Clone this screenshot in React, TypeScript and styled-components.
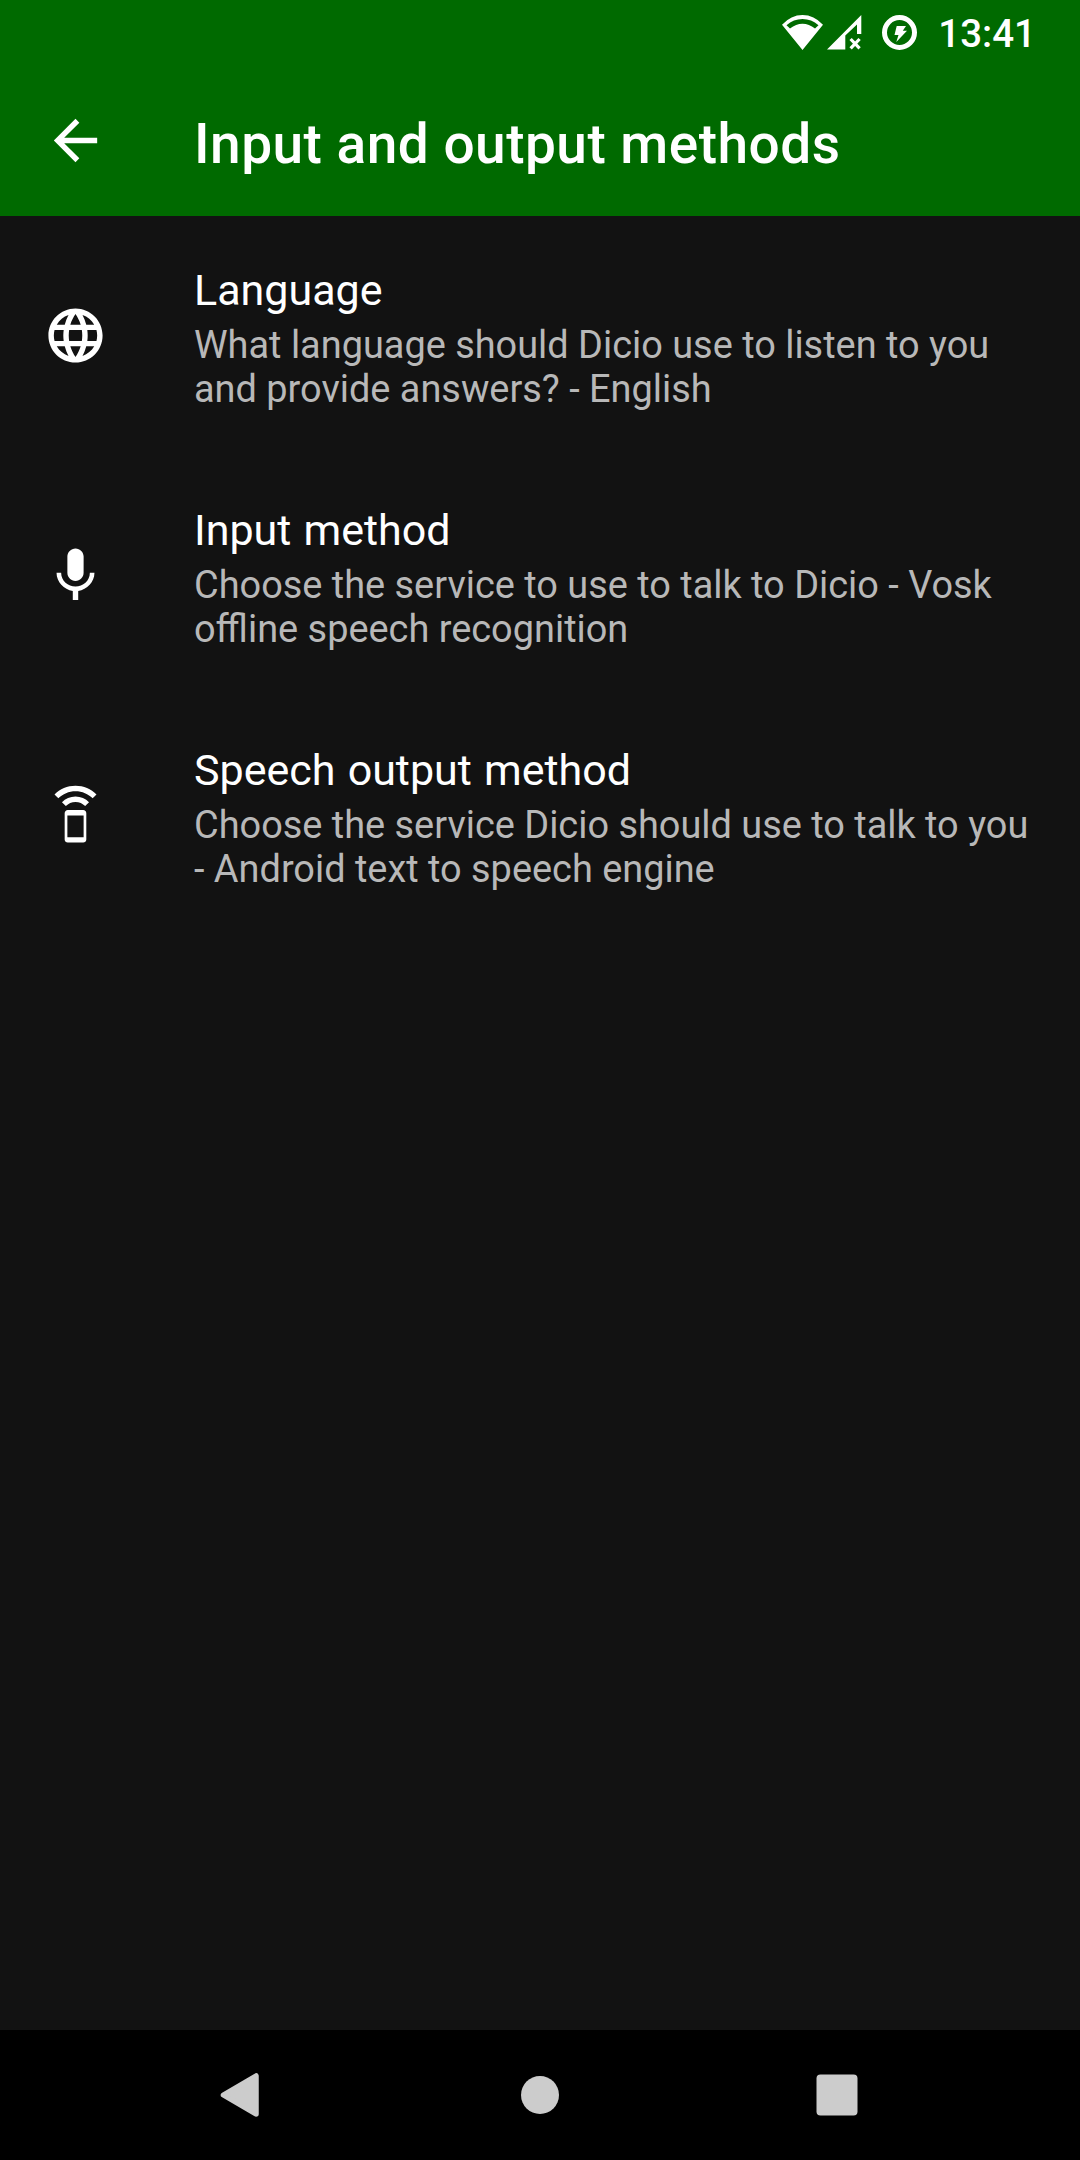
import React from 'react';
import styled, { createGlobalStyle } from 'styled-components';

const GlobalStyle = createGlobalStyle`
  * { box-sizing: border-box; }
  body { margin: 0; background: #121212; font-family: Roboto, sans-serif; }
`;

const Screen = styled.div`
  display: flex;
  flex-direction: column;
  width: 1080px;
  height: 2160px;
  background: #121212;
  color: #fff;
`;

const StatusBar = styled.div`
  display: flex;
  align-items: center;
  justify-content: flex-end;
  height: 66px;
  padding-right: 44px;
  background: #006a00;
`;

const StatusIcon = styled.svg<{ $gap: number }>`
  width: 36px;
  height: 36px;
  margin-right: ${(p) => p.$gap}px;
  overflow: visible;
  fill: #fff;
`;

const Clock = styled.span`
  padding-top: 2px;
  font-size: 38.5px;
  font-weight: 500;
  line-height: 46px;
`;

const AppBar = styled.header`
  display: flex;
  align-items: center;
  height: 150px;
  padding: 0 43px;
  background: #006a00;
`;

const Icon = styled.svg`
  flex: none;
  width: 65px;
  height: 65px;
  margin-bottom: 1px;
  fill: #fff;
`;

const BackButton = styled.button`
  display: flex;
  padding: 0;
  margin: 0 86px 0 0;
  border: 0;
  background: none;
`;

const Title = styled.h1`
  margin: 5px 0 0;
  font-size: 55px;
  font-weight: 500;
  line-height: 64px;
  letter-spacing: 0.48px;
`;

const List = styled.main`
  flex: 1;
  display: flex;
  flex-direction: column;
`;

const Row = styled.section`
  display: flex;
  align-items: center;
  gap: 86px;
  height: 240px;
  padding: 0 43px;
`;

const RowText = styled.div`
  flex: 1;
  padding-top: 1px;
`;

const RowTitle = styled.h2`
  margin: 0 0 4px;
  font-size: 43px;
  font-weight: 400;
  line-height: 57px;
  word-spacing: 1.5px;
`;

const Summary = styled.p`
  margin: 0;
  color: #b8b8b8;
  font-size: 37.9px;
  line-height: 44px;
  white-space: nowrap;
`;

const NavBar = styled.nav`
  display: flex;
  align-items: center;
  justify-content: center;
  gap: 219px;
  height: 130px;
  background: #000;
`;

const NavIcon = styled.svg`
  width: 78px;
  height: 78px;
  fill: #ccc;
`;

const rows = [
  {
    title: 'Language',
    lines: ['What language should Dicio use to listen to you', 'and provide answers? - English'],
    path: 'M11.99 2C6.47 2 2 6.48 2 12s4.47 10 9.99 10C17.52 22 22 17.52 22 12S17.52 2 11.99 2zm6.93 6h-2.95c-.32-1.25-.78-2.45-1.38-3.56 1.84.63 3.37 1.91 4.33 3.56zM12 4.04c.83 1.2 1.48 2.53 1.91 3.96h-3.82c.43-1.43 1.08-2.76 1.91-3.96zM4.26 14C4.1 13.36 4 12.69 4 12s.1-1.36.26-2h3.38c-.08.66-.14 1.32-.14 2s.06 1.34.14 2H4.26zm.82 2h2.95c.32 1.25.78 2.45 1.38 3.56-1.84-.63-3.37-1.9-4.33-3.56zm2.95-8H5.08c.96-1.66 2.49-2.93 4.33-3.56C8.81 5.55 8.35 6.75 8.03 8zM12 19.96c-.83-1.2-1.48-2.53-1.91-3.96h3.82c-.43 1.43-1.08 2.76-1.91 3.96zM14.34 14H9.66c-.09-.66-.16-1.32-.16-2s.07-1.35.16-2h4.68c.09.65.16 1.32.16 2s-.07 1.34-.16 2zm.25 5.56c.6-1.11 1.06-2.31 1.38-3.56h2.95c-.96 1.65-2.49 2.93-4.33 3.56zM16.36 14c.08-.66.14-1.32.14-2s-.06-1.34-.14-2h3.38c.16.64.26 1.31.26 2s-.1 1.36-.26 2h-3.38z',
  },
  {
    title: 'Input method',
    lines: ['Choose the service to use to talk to Dicio - Vosk', 'offline speech recognition'],
    path: 'M12 14c1.66 0 2.99-1.34 2.99-3L15 5c0-1.66-1.34-3-3-3S9 3.34 9 5v6c0 1.66 1.34 3 3 3zm5.3-3c0 3-2.54 5.1-5.3 5.1S6.7 14 6.7 11H5c0 3.41 2.72 6.23 6 6.72V21h2v-3.28c3.28-.48 6-3.3 6-6.72h-1.7z',
  },
  {
    title: 'Speech output method',
    lines: ['Choose the service Dicio should use to talk to you', '- Android text to speech engine'],
    path: 'M7 7.07L8.43 8.5c.91-.91 2.18-1.5 3.57-1.5s2.66.59 3.57 1.5L17 7.07C15.72 5.79 13.95 5 12 5s-3.72.79-5 2.07zM12 1C8.98 1 6.24 2.23 4.25 4.21l1.41 1.41C7.28 4 9.53 3 12 3s4.72 1 6.34 2.62l1.41-1.41C17.76 2.23 15.02 1 12 1zm2.86 9.01L9.14 10C8.51 10 8 10.51 8 11.14v9.71c0 .63.51 1.14 1.14 1.14h5.71c.63 0 1.14-.51 1.14-1.14v-9.71c.01-.63-.5-1.13-1.13-1.13zM15 20H9v-8h6v8z',
  },
];

export default function App() {
  return (
    <Screen>
      <GlobalStyle />
      <StatusBar>
        <StatusIcon $gap={6} viewBox="0 0 36 36">
          <path fillRule="evenodd" d="M17.5 35L-3 9.7Q6 0 17.5 0T38 9.7zM1.5 10.2L5 13.5Q11 8.8 17.5 8.8T30 13.5L33.5 10.2Q26.5 4 17.5 4T1.5 10.2z" />
        </StatusIcon>
        <StatusIcon $gap={19} viewBox="0 0 36 36">
          <path fillRule="evenodd" d="M0 34.5L34.3 0V19H30V9.5L18.3 20.5V34.5z" />
          <path d="M23.6 24L32.6 33.4M32.6 24L23.6 33.4" stroke="#fff" strokeWidth="3.2" />
        </StatusIcon>
        <StatusIcon $gap={20} viewBox="0 0 36 36">
          <circle cx="17.5" cy="17.5" r="15" fill="none" stroke="#fff" strokeWidth="5" />
          <path d="M14.7 11H24L20.8 15.8H25L14.3 27L16.5 20H12.5z" />
        </StatusIcon>
        <Clock>13:41</Clock>
      </StatusBar>
      <AppBar>
        <BackButton aria-label="Back">
          <Icon viewBox="0 0 24 24">
            <path d="M20 11H7.83l5.59-5.59L12 4l-8 8 8 8 1.41-1.41L7.83 13H20v-2z" />
          </Icon>
        </BackButton>
        <Title>Input and output methods</Title>
      </AppBar>
      <List>
        {rows.map((row) => (
          <Row key={row.title}>
            <Icon viewBox="0 0 24 24">
              <path d={row.path} />
            </Icon>
            <RowText>
              <RowTitle>{row.title}</RowTitle>
              {row.lines.map((line) => (
                <Summary key={line}>{line}</Summary>
              ))}
            </RowText>
          </Row>
        ))}
      </List>
      <NavBar>
        <NavIcon viewBox="0 0 78 78">
          <path d="M52 20V58L19.5 39z" stroke="#ccc" strokeWidth="5.5" strokeLinejoin="round" />
        </NavIcon>
        <NavIcon viewBox="0 0 78 78">
          <circle cx="39" cy="39" r="19" />
        </NavIcon>
        <NavIcon viewBox="0 0 78 78">
          <rect x="18.5" y="18.5" width="41" height="41" rx="4" />
        </NavIcon>
      </NavBar>
    </Screen>
  );
}
